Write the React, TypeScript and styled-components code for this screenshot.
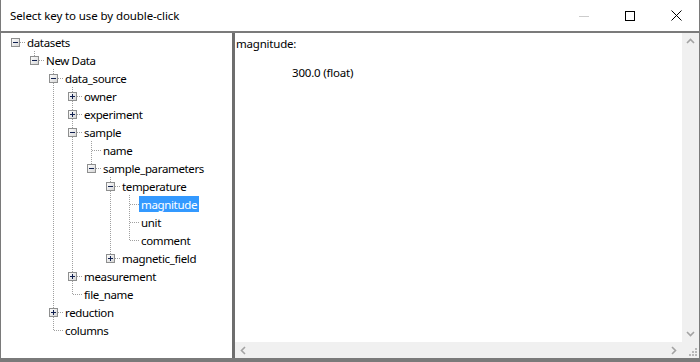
import styled, { createGlobalStyle } from 'styled-components'

const GlobalStyle = createGlobalStyle`
  html, body {
    margin: 0;
    padding: 0;
    background: #ffffff;
  }
  body {
    font-family: "Noto Sans", "Open Sans", sans-serif;
  }
`

type TreeNode = {
  label: string
  depth: number
  state?: 'open' | 'closed'
  selected?: boolean
}

const nodes: TreeNode[] = [
  { label: 'datasets', depth: 0, state: 'open' },
  { label: 'New Data', depth: 1, state: 'open' },
  { label: 'data_source', depth: 2, state: 'open' },
  { label: 'owner', depth: 3, state: 'closed' },
  { label: 'experiment', depth: 3, state: 'closed' },
  { label: 'sample', depth: 3, state: 'open' },
  { label: 'name', depth: 4 },
  { label: 'sample_parameters', depth: 4, state: 'open' },
  { label: 'temperature', depth: 5, state: 'open' },
  { label: 'magnitude', depth: 6, selected: true },
  { label: 'unit', depth: 6 },
  { label: 'comment', depth: 6 },
  { label: 'magnetic_field', depth: 5, state: 'closed' },
  { label: 'measurement', depth: 3, state: 'closed' },
  { label: 'file_name', depth: 3 },
  { label: 'reduction', depth: 2, state: 'closed' },
  { label: 'columns', depth: 2 },
]

const hasNextSibling = (i: number) => {
  const d = nodes[i].depth
  for (let j = i + 1; j < nodes.length; j++) {
    if (nodes[j].depth < d) return false
    if (nodes[j].depth === d) return true
  }
  return false
}

const ancestorIndex = (i: number, depth: number) => {
  for (let j = i - 1; j >= 0; j--) {
    if (nodes[j].depth === depth) return j
  }
  return -1
}

const Window = styled.div`
  width: 700px;
  height: 362px;
  box-sizing: border-box;
  border-left: 1px solid #7a7a7a;
  border-right: 1px solid #7a7a7a;
  border-bottom: 4px solid #7a7a7a;
  display: flex;
  flex-direction: column;
  background: #ffffff;
  overflow: hidden;
`

const TitleBar = styled.div`
  height: 31px;
  flex: none;
  display: flex;
  align-items: center;
  border-bottom: 2px solid #7b7b7b;
  font-size: 11.5px;
  letter-spacing: -0.1px;
  color: #000;
`

const TitleText = styled.div`
  flex: 1;
  padding-left: 9px;
`

const Controls = styled.div`
  display: flex;
  height: 100%;
`

const ControlButton = styled.div`
  width: 46px;
  height: 100%;
  display: flex;
  align-items: center;
  justify-content: center;
`

const Body = styled.div`
  flex: 1;
  display: flex;
  min-height: 0;
`

const TreePane = styled.div`
  width: 231px;
  flex: none;
  padding-left: 5px;
  box-sizing: border-box;
  font-size: 11.5px;
  letter-spacing: -0.35px;
  color: #000;
`

const Row = styled.div`
  height: 18px;
  display: flex;
  align-items: center;
`

const Label = styled.span<{ $selected?: boolean }>`
  padding: 1px 2px 0;
  line-height: 15px;
  white-space: nowrap;
  background: ${({ $selected }) => ($selected ? '#3399ff' : 'transparent')};
  color: ${({ $selected }) => ($selected ? '#ffffff' : '#000000')};
`

const Splitter = styled.div`
  width: 3px;
  flex: none;
  background: #6e6e6e;
`

const DetailPane = styled.div`
  flex: 1;
  display: grid;
  grid-template-columns: 1fr 17px;
  grid-template-rows: 1fr 16px;
  min-width: 0;
`

const Content = styled.div`
  padding: 2px 0 0 1px;
  font-size: 11.5px;
  letter-spacing: -0.2px;
  color: #000;
`

const KeyLine = styled.div`
  line-height: 18px;
`

const ValueLine = styled.div`
  line-height: 18px;
  margin-top: 11px;
  padding-left: 56px;
`

const VScroll = styled.div`
  background: #f0f0f0;
  display: flex;
  flex-direction: column;
  justify-content: space-between;
`

const HScroll = styled.div`
  background: #f0f0f0;
  display: flex;
  justify-content: space-between;
`

const ArrowButton = styled.div`
  width: 17px;
  height: 17px;
  display: flex;
  align-items: center;
  justify-content: center;
`

const HArrowButton = styled(ArrowButton)`
  height: 16px;
`

const Corner = styled.div`
  background: #f0f0f0;
  display: flex;
  align-items: flex-end;
  justify-content: flex-end;
`

const Connector = ({
  own,
  through,
  last,
  state,
}: {
  own: boolean
  through: boolean
  last?: boolean
  state?: 'open' | 'closed'
}) => (
  <svg width="19" height="18" style={{ flex: 'none', display: 'block' }} shapeRendering="crispEdges">
    {!own && through && (
      <line x1="9.5" y1="0" x2="9.5" y2="18" stroke="#a0a0a0" strokeDasharray="1 1" />
    )}
    {own && (
      <>
        {through && (
          <line x1="9.5" y1="0" x2="9.5" y2={last ? 10 : 18} stroke="#a0a0a0" strokeDasharray="1 1" />
        )}
        <line x1="10" y1="9.5" x2="19" y2="9.5" stroke="#a0a0a0" strokeDasharray="1 1" />
      </>
    )}
    {own && state && (
      <>
        <defs>
          <linearGradient id="box" x1="0" y1="0" x2="1" y2="1">
            <stop offset="0" stopColor="#ffffff" />
            <stop offset="1" stopColor="#d4d4d4" />
          </linearGradient>
        </defs>
        <rect x="5.5" y="5.5" width="8" height="8" fill="url(#box)" stroke="#8e8f8f" />
        <line x1="7" y1="9.5" x2="12" y2="9.5" stroke="#10204f" />
        {state === 'closed' && <line x1="9.5" y1="7" x2="9.5" y2="12" stroke="#10204f" />}
      </>
    )}
  </svg>
)

const Chevron = ({ dir }: { dir: 'up' | 'down' | 'left' | 'right' }) => {
  const pts = {
    up: '1,6 4.5,2.5 8,6',
    down: '1,3 4.5,6.5 8,3',
    left: '6,1 2.5,4.5 6,8',
    right: '3,1 6.5,4.5 3,8',
  }[dir]
  return (
    <svg width="9" height="9" viewBox="0 0 9 9">
      <polyline points={pts} fill="none" stroke="#a3a3a3" strokeWidth="1.6" />
    </svg>
  )
}

const Grip = () => (
  <svg width="12" height="12" viewBox="0 0 12 12" shapeRendering="crispEdges">
    {[
      [8, 2],
      [5, 5],
      [8, 5],
      [2, 8],
      [5, 8],
      [8, 8],
    ].map(([x, y]) => (
      <rect key={`${x}-${y}`} x={x} y={y} width="2" height="2" fill="#b8b8b8" />
    ))}
  </svg>
)

const TreeRow = ({ node, index }: { node: TreeNode; index: number }) => {
  const cells = []
  for (let k = 0; k < node.depth; k++) {
    const a = ancestorIndex(index, k)
    const through = a >= 0 && k > 0 && hasNextSibling(a)
    cells.push(<Connector key={k} own={false} through={through} />)
  }
  const next = hasNextSibling(index)
  cells.push(
    <Connector
      key="own"
      own
      through={node.depth > 0}
      last={!next}
      state={node.state}
    />,
  )
  return (
    <Row>
      {cells}
      <Label $selected={node.selected}>{node.label}</Label>
    </Row>
  )
}

export default function App() {
  return (
    <>
      <GlobalStyle />
      <Window>
        <TitleBar>
          <TitleText>Select key to use by double-click</TitleText>
          <Controls>
            <ControlButton>
              <svg width="10" height="10" shapeRendering="crispEdges">
                <line x1="0" y1="5.5" x2="10" y2="5.5" stroke="#cccccc" />
              </svg>
            </ControlButton>
            <ControlButton>
              <svg width="10" height="10" shapeRendering="crispEdges">
                <rect x="0.5" y="0.5" width="9" height="9" fill="none" stroke="#000" />
              </svg>
            </ControlButton>
            <ControlButton>
              <svg width="11" height="11">
                <path d="M0.5 0.5 L10.5 10.5 M10.5 0.5 L0.5 10.5" stroke="#000" strokeWidth="1" />
              </svg>
            </ControlButton>
          </Controls>
        </TitleBar>
        <Body>
          <TreePane>
            {nodes.map((n, i) => (
              <TreeRow key={n.label} node={n} index={i} />
            ))}
          </TreePane>
          <Splitter />
          <DetailPane>
            <Content>
              <KeyLine>magnitude:</KeyLine>
              <ValueLine>300.0 (float)</ValueLine>
            </Content>
            <VScroll>
              <ArrowButton>
                <Chevron dir="up" />
              </ArrowButton>
              <ArrowButton>
                <Chevron dir="down" />
              </ArrowButton>
            </VScroll>
            <HScroll>
              <HArrowButton>
                <Chevron dir="left" />
              </HArrowButton>
              <HArrowButton>
                <Chevron dir="right" />
              </HArrowButton>
            </HScroll>
            <Corner>
              <Grip />
            </Corner>
          </DetailPane>
        </Body>
      </Window>
    </>
  )
}
